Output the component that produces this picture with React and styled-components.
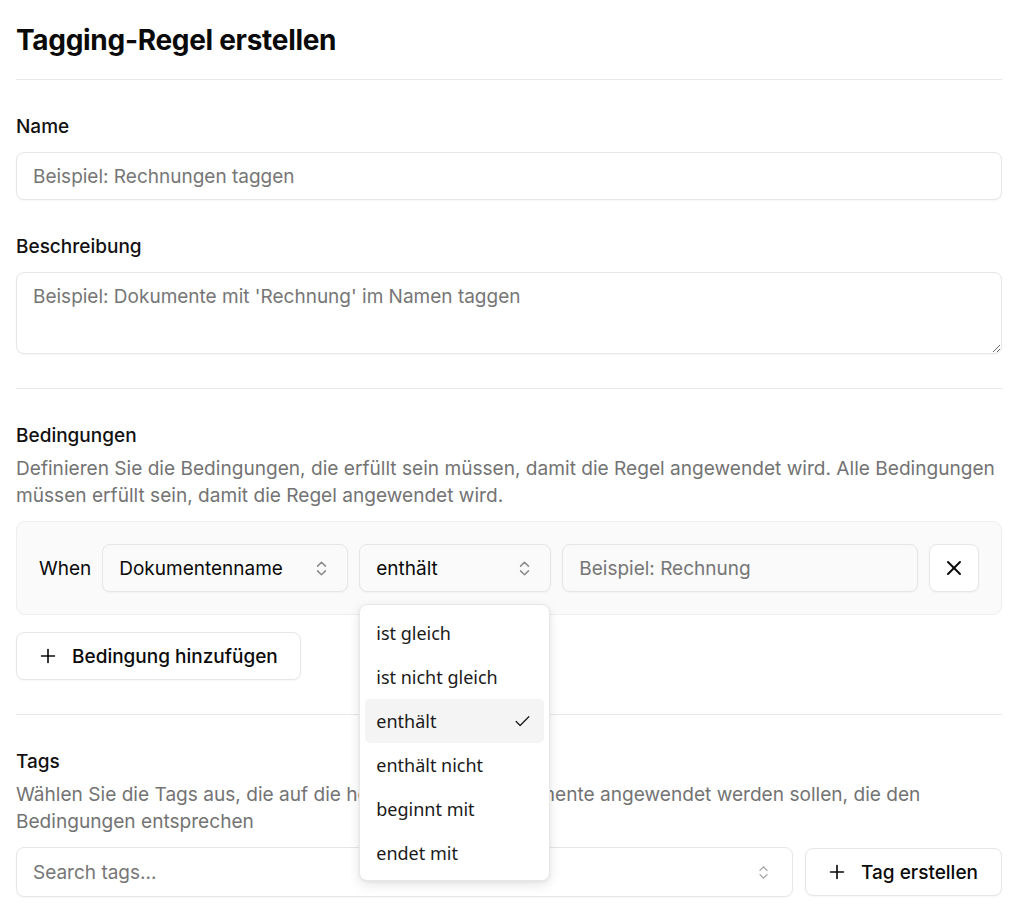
import React from "react";
import styled, { createGlobalStyle } from "styled-components";
import { ChevronsUpDown, X, Plus, Check } from "lucide-react";

const Global = createGlobalStyle`
  html, body { margin: 0; padding: 0; background: #ffffff; }
  body { font-family: Inter, "Noto Sans", sans-serif; color: #0a0a0a; -webkit-font-smoothing: antialiased; }
  * { box-sizing: border-box; }
`;

const Page = styled.div`
  padding: 21px 22px 40px 16px;
`;

const Title = styled.h1`
  margin: 0;
  font-size: 28px;
  line-height: 38.4px;
  font-weight: 700;
  letter-spacing: -0.3px;
`;

const Divider = styled.hr`
  border: none;
  border-top: 1px solid #e8e8e8;
  margin: ${(p) => p.$top || 0}px 0 0;
  height: 0;
`;

const Section = styled.section`
  margin-top: 35px;
  display: flex;
  flex-direction: column;
`;

const Label = styled.label`
  font-size: 19px;
  line-height: 24px;
  font-weight: 500;
  color: #111111;
`;

const Help = styled.p`
  margin: 7px 0 0;
  font-size: 19.1px;
  line-height: 27px;
  color: #737373;
`;

const fieldBase = `
  font-family: Inter, "Noto Sans", sans-serif;
  font-size: 19px;
  color: #0a0a0a;
  border: 1px solid #e6e6e6;
  border-radius: 8px;
  background: #ffffff;
  box-shadow: 0 1px 2px rgba(0,0,0,0.04);
  outline: none;
  &::placeholder { color: #767676; }
`;

const TextInput = styled.input`
  ${fieldBase}
  margin-top: 13px;
  height: 48px;
  width: 100%;
  padding: 0 16px;
`;

const TextArea = styled.textarea`
  ${fieldBase}
  margin-top: 13px;
  height: 82px;
  width: 100%;
  padding: 12px 16px;
  line-height: 24px;
  resize: vertical;
`;

const ConditionBox = styled.div`
  margin-top: 12px;
  border: 1px solid #eeeeee;
  border-radius: 9px;
  background: #fafafa;
  padding: 22px;
  display: flex;
  align-items: center;
  gap: 11px;
`;

const When = styled.span`
  font-size: 19px;
  color: #0a0a0a;
`;

const SelectWrap = styled.div`
  position: relative;
  width: ${(p) => p.$w}px;
  flex: none;
`;

const SelectTrigger = styled.div`
  ${fieldBase}
  background: #fafafa;
  height: 48px;
  display: flex;
  align-items: center;
  justify-content: space-between;
  padding: 0 16px;
  color: #0a0a0a;
  svg { color: #8a8a8a; }
`;

const CondInput = styled.input`
  ${fieldBase}
  background: #fafafa;
  height: 48px;
  flex: 1;
  min-width: 0;
  padding: 0 16px;
`;

const IconButton = styled.button`
  ${fieldBase}
  width: 50px;
  height: 48px;
  flex: none;
  display: flex;
  align-items: center;
  justify-content: center;
  padding: 0;
  cursor: pointer;
`;

const Menu = styled.ul`
  position: absolute;
  top: 60px;
  left: 0;
  width: 191px;
  margin: 0;
  padding: 6px 5px 5px;
  list-style: none;
  background: #ffffff;
  border: 1px solid #e8e8e8;
  border-radius: 8px;
  box-shadow: 0 4px 12px rgba(0,0,0,0.10), 0 1px 3px rgba(0,0,0,0.06);
  z-index: 10;
`;

const MenuItem = styled.li`
  height: 44px;
  display: flex;
  align-items: center;
  justify-content: space-between;
  padding: 0 12px 0 11px;
  border-radius: 5px;
  font-family: "Noto Sans", "Open Sans", sans-serif;
  font-size: 18px;
  color: #1a1a1a;
  background: ${(p) => (p.$active ? "#f4f4f4" : "transparent")};
`;

const Button = styled.button`
  ${fieldBase}
  height: 48px;
  display: inline-flex;
  align-items: center;
  gap: 13px;
  padding: 0 ${(p) => p.$pr}px 0 ${(p) => p.$pl}px;
  font-weight: 500;
  cursor: pointer;
  flex: none;
`;

const AddRow = styled.div`
  margin-top: 17px;
  display: flex;
`;

const TagRow = styled.div`
  margin-top: 12px;
  display: flex;
  gap: 12px;
  align-items: center;
`;

const Combo = styled.div`
  ${fieldBase}
  flex: 1;
  height: 50px;
  display: flex;
  align-items: center;
  justify-content: space-between;
  padding: 0 20px 0 16px;
  color: #767676;
  svg { color: #9a9a9a; }
`;

const options = [
  "ist gleich",
  "ist nicht gleich",
  "enthält",
  "enthält nicht",
  "beginnt mit",
  "endet mit",
];

export default function App() {
  return (
    <>
      <Global />
      <Page>
        <Title>Tagging-Regel erstellen</Title>
        <Divider $top={20} />

        <Section>
          <Label>Name</Label>
          <TextInput placeholder="Beispiel: Rechnungen taggen" />
        </Section>

        <Section>
          <Label>Beschreibung</Label>
          <TextArea placeholder="Beispiel: Dokumente mit 'Rechnung' im Namen taggen" />
        </Section>

        <Divider $top={34} />

        <Section>
          <Label>Bedingungen</Label>
          <Help>
            Definieren Sie die Bedingungen, die erfüllt sein müssen, damit die Regel angewendet wird. Alle Bedingungen
            müssen erfüllt sein, damit die Regel angewendet wird.
          </Help>
          <ConditionBox>
            <When>When</When>
            <SelectWrap $w={246}>
              <SelectTrigger>
                <span>Dokumentenname</span>
                <ChevronsUpDown size={19} strokeWidth={1.8} />
              </SelectTrigger>
            </SelectWrap>
            <SelectWrap $w={192}>
              <SelectTrigger>
                <span>enthält</span>
                <ChevronsUpDown size={19} strokeWidth={1.8} />
              </SelectTrigger>
              <Menu>
                {options.map((o) => (
                  <MenuItem key={o} $active={o === "enthält"}>
                    <span>{o}</span>
                    {o === "enthält" && <Check size={19} strokeWidth={1.6} color="#1a1a1a" />}
                  </MenuItem>
                ))}
              </Menu>
            </SelectWrap>
            <CondInput placeholder="Beispiel: Rechnung" />
            <IconButton aria-label="Entfernen">
              <X size={24} strokeWidth={2} />
            </IconButton>
          </ConditionBox>
          <AddRow>
            <Button $pl={20} $pr={22}>
              <Plus size={22} strokeWidth={1.8} />
              Bedingung hinzufügen
            </Button>
          </AddRow>
        </Section>

        <Divider $top={34} />

        <Section>
          <Label>Tags</Label>
          <Help>
            Wählen Sie die Tags aus, die auf die hochgeladenen Dokumente angewendet werden sollen, die den
            Bedingungen entsprechen
          </Help>
          <TagRow>
            <Combo>
              <span>Search tags...</span>
              <ChevronsUpDown size={17} strokeWidth={1.6} />
            </Combo>
            <Button $pl={20} $pr={23}>
              <Plus size={22} strokeWidth={1.8} />
              Tag erstellen
            </Button>
          </TagRow>
        </Section>
      </Page>
    </>
  );
}
